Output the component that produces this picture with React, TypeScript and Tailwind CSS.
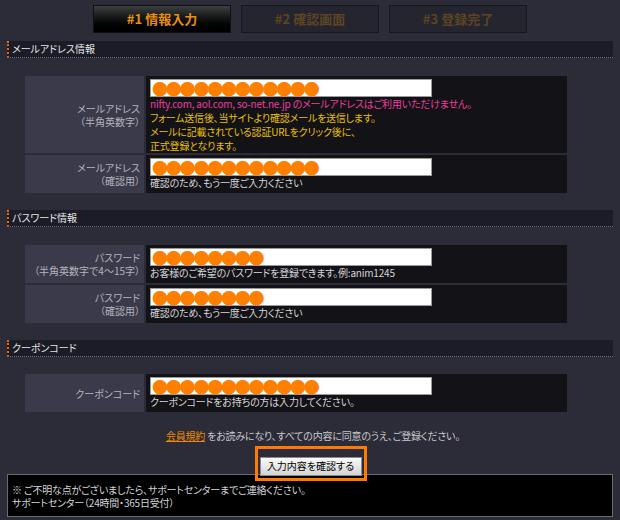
import React from "react";

const jp = "font-['Noto_Sans_CJK_JP',sans-serif] [font-feature-settings:'palt']";

function Dots({ n }: { n: number }) {
  return (
    <div className="w-[282px] h-[18px] bg-white border border-[#9a9a9a] flex items-center pl-[1px]">
      <span className="text-[16px] leading-[16px] tracking-[-2.2px] text-[#ff8000] font-['Noto_Sans_CJK_JP',sans-serif]">
        {"●".repeat(n)}
      </span>
    </div>
  );
}

function SectionHeader({ title }: { title: string }) {
  return (
    <div className="mx-[7px] h-[17px] bg-[#1c1c26] border-l-2 border-[#e06a10] border-b border-b-[#6e6e7c] border-dotted flex items-center pl-[3px]">
      <span className="text-[10px] leading-none text-[#e4e4e8]">{title}</span>
    </div>
  );
}

function Row({
  label,
  sub,
  dots,
  tight,
  children,
}: {
  label: string;
  sub?: string;
  dots: number;
  tight?: boolean;
  children: React.ReactNode;
}) {
  return (
    <div className="flex gap-[2px]">
      <div className="w-[119px] bg-[#3a3a4a] flex flex-col justify-center items-end pr-[4px] text-[10px] leading-[13px] text-[#b4b4bc] whitespace-nowrap">
        <div>{label}</div>
        {sub && <div>{sub}</div>}
      </div>
      <div className={`flex-1 bg-[#131317] pl-[4px] pt-[3px] ${tight ? "pb-0" : "pb-[3px]"}`}>
        <Dots n={dots} />
        <div className="text-[10px] leading-[14px] tracking-[-0.2px] whitespace-nowrap">{children}</div>
      </div>
    </div>
  );
}

export default function App() {
  return (
    <div className={`w-[620px] h-[520px] bg-[#2c2c38] overflow-hidden ${jp}`}>
      {/* steps */}
      <div className="flex justify-center gap-[10px] pt-[5px]">
        <div className="w-[138px] h-[28px] flex items-center justify-center bg-gradient-to-b from-[#3c4040] to-[#000000] border border-[#101014] text-[13px] font-bold text-[#e8900c]">
          #1 情報入力
        </div>
        <div className="w-[138px] h-[28px] flex items-center justify-center bg-[#25252f] border border-[#16161c] text-[13px] font-bold text-[#5c4424]">
          #2 確認画面
        </div>
        <div className="w-[138px] h-[28px] flex items-center justify-center bg-[#25252f] border border-[#16161c] text-[13px] font-bold text-[#5c4424]">
          #3 登録完了
        </div>
      </div>

      <div className="mt-[8px]">
        <SectionHeader title="メールアドレス情報" />
      </div>
      <div className="ml-[25px] w-[542px] mt-[18px] flex flex-col gap-[2px]">
        <Row label="メールアドレス" sub="（半角英数字）" dots={12} tight>
          <div className="text-[#e8409c]">
            nifty.com, aol.com, so-net.ne.jp のメールアドレスはご利用いただけません。
          </div>
          <div className="text-[#e8c000]">
            フォーム送信後、当サイトより確認メールを送信します。
          </div>
          <div className="text-[#e8c000]">
            メールに記載されている認証URLをクリック後に、
          </div>
          <div className="text-[#e8c000]">正式登録となります。</div>
        </Row>
        <Row label="メールアドレス" sub="（確認用）" dots={12}>
          <div className="text-[#d4d4d8]">確認のため、もう一度ご入力ください</div>
        </Row>
      </div>

      <div className="mt-[17px]">
        <SectionHeader title="パスワード情報" />
      </div>
      <div className="ml-[25px] w-[542px] mt-[18px] flex flex-col gap-[2px]">
        <Row label="パスワード" sub="（半角英数字で4～15字）" dots={8}>
          <div className="text-[#d4d4d8]">
            お客様のご希望のパスワードを登録できます。例:anim1245
          </div>
        </Row>
        <Row label="パスワード" sub="（確認用）" dots={8}>
          <div className="text-[#d4d4d8]">確認のため、もう一度ご入力ください</div>
        </Row>
      </div>

      <div className="mt-[17px]">
        <SectionHeader title="クーポンコード" />
      </div>
      <div className="ml-[25px] w-[542px] mt-[17px] flex flex-col gap-[2px]">
        <Row label="クーポンコード" dots={12}>
          <div className="text-[#d4d4d8]">
            クーポンコードをお持ちの方は入力してください。
          </div>
        </Row>
      </div>

      <div className="mt-[17px] pl-[6px] text-center text-[10px] leading-[14px] tracking-[-0.2px] text-[#c8c8cc]">
        <span className="text-[#f08a00] underline">会員規約</span> をお読みになり、すべての内容に同意のうえ、ご登録ください。
      </div>

      <div className="relative z-10 mt-[3px] flex justify-center">
        <div className="border-[3px] border-[#ff7a00] p-[2px] ml-[1px]">
          <button className="h-[19px] w-[102px] bg-gradient-to-b from-[#fafafa] to-[#d4d4d4] border border-[#8a8a8a] text-[10px] text-black leading-none">
            入力内容を確認する
          </button>
        </div>
      </div>

      <div className="mt-[-7px] mx-[7px] h-[43px] bg-black border border-[#6a6a70] pl-[4px] pt-[8px] text-[10px] leading-[13px] tracking-[-0.2px] text-[#d4d4d8]">
        <div>※ ご不明な点がございましたら、サポートセンターまでご連絡ください。</div>
        <div>サポートセンター（24時間・365日受付）</div>
      </div>
    </div>
  );
}
